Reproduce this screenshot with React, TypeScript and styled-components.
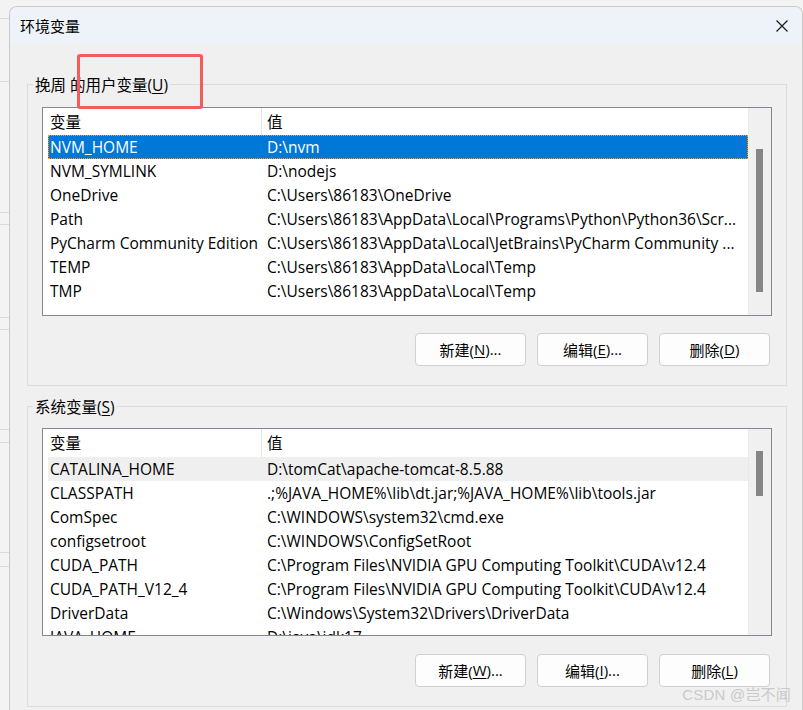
import React from 'react';
import styled, { createGlobalStyle } from 'styled-components';

const Global = createGlobalStyle`
  html, body { margin: 0; padding: 0; background: #f3f3f3; }
  body {
    width: 803px; height: 710px; overflow: hidden;
    font-family: "Open Sans", "Noto Sans CJK SC", sans-serif;
    color: #000;
  }
  * { box-sizing: border-box; }
`;

const Screen = styled.div`
  position: relative;
  display: flex;
  width: 803px;
  height: 710px;
  overflow: hidden;
`;

const BackStrip = styled.div`
  width: 9px;
  flex: none;
  display: flex;
  flex-direction: column;
  background: #f3f3f3;
`;

const StripLine = styled.div<{ $top: number }>`
  margin-top: ${(p) => p.$top}px;
  height: 1px;
  background: #d9d9d9;
`;

const Dialog = styled.div`
  flex: 1;
  margin-top: 6px;
  background: #f0f0f0;
  border: 1px solid #c9c9c9;
  border-bottom: none;
  border-radius: 8px 8px 0 0;
  display: flex;
  flex-direction: column;
  overflow: hidden;
`;

const TitleBar = styled.div`
  height: 37px;
  flex: none;
  background: #eef3f9;
  display: flex;
  align-items: center;
  justify-content: space-between;
  padding: 0 13px 0 10px;
`;

const TitleText = styled.div`
  font-size: 15px;
  font-family: "Noto Sans CJK SC", sans-serif;
  padding-bottom: 1px;
`;

const CloseIcon = styled.svg`
  width: 14px;
  height: 14px;
  display: block;
`;

const Body = styled.div`
  flex: 1;
  padding: 0 15px 0 17px;
  display: flex;
  flex-direction: column;
`;

const Group = styled.div<{ $mt: number; $pt: number }>`
  position: relative;
  margin-top: ${(p) => p.$mt}px;
  border: 1px solid #dcdcdc;
  padding: ${(p) => p.$pt}px 14px 19px 14px;
  display: flex;
  flex-direction: column;
`;

const Legend = styled.div`
  position: absolute;
  left: 5px;
  top: -11px;
  padding: 0 2px;
  background: #f0f0f0;
  font-size: 15.5px;
  line-height: 22px;
  white-space: nowrap;
`;

const Mn = styled.span`
  text-decoration: underline;
  text-underline-offset: 2px;
  text-decoration-thickness: 1px;
`;

const ListBox = styled.div<{ $h: number }>`
  height: ${(p) => p.$h}px;
  border: 1px solid #828790;
  background: #fff;
  display: flex;
  overflow: hidden;
`;

const Rows = styled.div`
  flex: 1;
  padding-left: 5px;
  display: flex;
  flex-direction: column;
  overflow: hidden;
`;

const HeaderRow = styled.div<{ $h: number }>`
  height: ${(p) => p.$h}px;
  flex: none;
  display: flex;
  align-items: stretch;
  font-size: 15.5px;
`;

const HeaderCell = styled.div<{ $w?: number; $sep?: boolean }>`
  ${(p) => (p.$w ? `width: ${p.$w}px; flex: none;` : 'flex: 1;')}
  display: flex;
  align-items: center;
  padding-left: ${(p) => (p.$sep ? 5 : 2)}px;
  padding-bottom: 1px;
  border-right: ${(p) => (p.$sep ? 'none' : '1px solid #e5e5e5')};
`;

const Row = styled.div<{ $state?: 'sel' | 'hover' }>`
  height: 24px;
  flex: none;
  display: flex;
  align-items: center;
  font-size: 15.5px;
  white-space: nowrap;
  background: ${(p) => (p.$state === 'sel' ? '#0078d7' : p.$state === 'hover' ? '#efefef' : 'transparent')};
  color: ${(p) => (p.$state === 'sel' ? '#fff' : '#000')};
  outline: ${(p) => (p.$state === 'sel' ? '1px dotted #f0a040' : 'none')};
  outline-offset: -1px;
`;

const NameCell = styled.div`
  width: 214px;
  flex: none;
  padding-left: 2px;
  overflow: hidden;
`;

const ValueCell = styled.div`
  flex: 1;
  padding-left: 5px;
  overflow: hidden;
`;

const ScrollTrack = styled.div`
  width: 23px;
  flex: none;
  background: #f0f0f0;
  border-left: 1px solid #e9e9e9;
  padding-left: 7px;
`;

const Thumb = styled.div<{ $top: number; $h: number }>`
  width: 7px;
  margin-top: ${(p) => p.$top}px;
  height: ${(p) => p.$h}px;
  background: #868686;
`;

const ButtonRow = styled.div<{ $mt: number }>`
  margin-top: ${(p) => p.$mt}px;
  display: flex;
  justify-content: flex-end;
  gap: 11px;
  padding-right: 2px;
`;

const Button = styled.div`
  width: 111px;
  height: 33px;
  border: 1px solid #d0d0d0;
  border-radius: 4px;
  background: #fdfdfd;
  display: flex;
  align-items: center;
  justify-content: center;
  font-size: 15px;
  padding-bottom: 1px;
`;

const Highlight = styled.div`
  position: absolute;
  left: 77px;
  top: 54px;
  width: 126px;
  height: 55px;
  border: 3px solid #f45b5b;
  border-radius: 3px;
`;

const Watermark = styled.div`
  position: absolute;
  right: 12px;
  bottom: 6px;
  font-size: 15px;
  color: #cacaca;
  font-family: "Liberation Sans", "Noto Sans CJK SC", sans-serif;
  letter-spacing: 0.2px;
`;

type Item = { name: string; value: string; state?: 'sel' | 'hover' };

const userVars: Item[] = [
  { name: 'NVM_HOME', value: 'D:\\nvm', state: 'sel' },
  { name: 'NVM_SYMLINK', value: 'D:\\nodejs' },
  { name: 'OneDrive', value: 'C:\\Users\\86183\\OneDrive' },
  { name: 'Path', value: 'C:\\Users\\86183\\AppData\\Local\\Programs\\Python\\Python36\\Scr...' },
  { name: 'PyCharm Community Edition', value: 'C:\\Users\\86183\\AppData\\Local\\JetBrains\\PyCharm Community ...' },
  { name: 'TEMP', value: 'C:\\Users\\86183\\AppData\\Local\\Temp' },
  { name: 'TMP', value: 'C:\\Users\\86183\\AppData\\Local\\Temp' },
];

const sysVars: Item[] = [
  { name: 'CATALINA_HOME', value: 'D:\\tomCat\\apache-tomcat-8.5.88', state: 'hover' },
  { name: 'CLASSPATH', value: '.;%JAVA_HOME%\\lib\\dt.jar;%JAVA_HOME%\\lib\\tools.jar' },
  { name: 'ComSpec', value: 'C:\\WINDOWS\\system32\\cmd.exe' },
  { name: 'configsetroot', value: 'C:\\WINDOWS\\ConfigSetRoot' },
  { name: 'CUDA_PATH', value: 'C:\\Program Files\\NVIDIA GPU Computing Toolkit\\CUDA\\v12.4' },
  { name: 'CUDA_PATH_V12_4', value: 'C:\\Program Files\\NVIDIA GPU Computing Toolkit\\CUDA\\v12.4' },
  { name: 'DriverData', value: 'C:\\Windows\\System32\\Drivers\\DriverData' },
  { name: 'JAVA_HOME', value: 'D:\\java\\jdk17' },
];

const stripLines = [18, 62, 130, 11, 92, 11, 99, 12, 109, 13];

function VarList({ items, h, headerH, thumbTop, thumbH }: { items: Item[]; h: number; headerH: number; thumbTop: number; thumbH: number }) {
  return (
    <ListBox $h={h}>
      <Rows>
        <HeaderRow $h={headerH}>
          <HeaderCell $w={214}>变量</HeaderCell>
          <HeaderCell $sep>值</HeaderCell>
        </HeaderRow>
        {items.map((it) => (
          <Row key={it.name} $state={it.state}>
            <NameCell>{it.name}</NameCell>
            <ValueCell>{it.value}</ValueCell>
          </Row>
        ))}
      </Rows>
      <ScrollTrack>
        <Thumb $top={thumbTop} $h={thumbH} />
      </ScrollTrack>
    </ListBox>
  );
}

export default function App() {
  return (
    <>
      <Global />
      <Screen>
        <BackStrip>
          {stripLines.map((t, i) => (
            <StripLine key={i} $top={t} />
          ))}
        </BackStrip>
        <Dialog>
          <TitleBar>
            <TitleText>环境变量</TitleText>
            <CloseIcon viewBox="0 0 14 14">
              <path d="M1.5 1.5 L12.5 12.5 M12.5 1.5 L1.5 12.5" stroke="#1a1a1a" strokeWidth="1.2" fill="none" />
            </CloseIcon>
          </TitleBar>
          <Body>
            <Group $mt={40} $pt={22}>
              <Legend>
                挽周 的用户变量(<Mn>U</Mn>)
              </Legend>
              <VarList items={userVars} h={209} headerH={27} thumbTop={41} thumbH={143} />
              <ButtonRow $mt={17}>
                <Button>新建(<Mn>N</Mn>)...</Button>
                <Button>编辑(<Mn>E</Mn>)...</Button>
                <Button>删除(<Mn>D</Mn>)</Button>
              </ButtonRow>
            </Group>
            <Group $mt={20} $pt={21}>
              <Legend>
                系统变量(<Mn>S</Mn>)
              </Legend>
              <VarList items={sysVars} h={208} headerH={28} thumbTop={22} thumbH={45} />
              <ButtonRow $mt={18}>
                <Button>新建(<Mn>W</Mn>)...</Button>
                <Button>编辑(<Mn>I</Mn>)...</Button>
                <Button>删除(<Mn>L</Mn>)</Button>
              </ButtonRow>
            </Group>
          </Body>
        </Dialog>
        <Highlight />
        <Watermark>CSDN @岂不闻</Watermark>
      </Screen>
    </>
  );
}
